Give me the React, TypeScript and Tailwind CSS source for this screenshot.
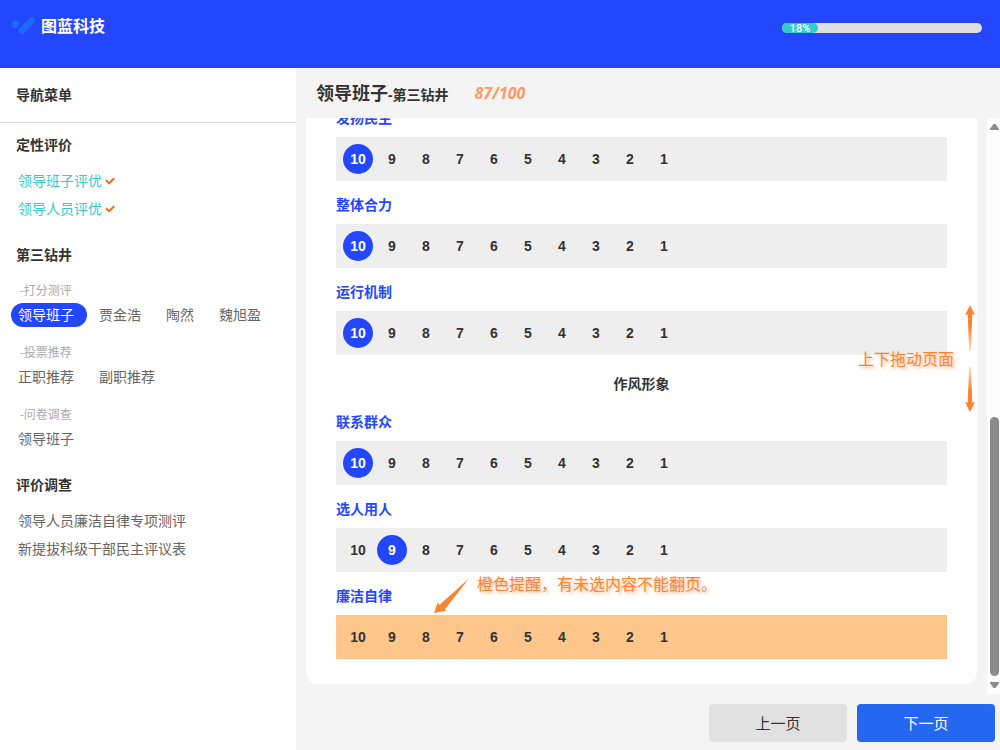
import { useState } from "react";

const SCORES = [10, 9, 8, 7, 6, 5, 4, 3, 2, 1];

type Criterion = { id: string; name: string; value: number | null };
type CriterionGroup = { title?: string; items: Criterion[] };

const GROUPS: CriterionGroup[] = [
  {
    items: [
      { id: "democracy", name: "发扬民主", value: 10 },
      { id: "cohesion", name: "整体合力", value: 10 },
      { id: "mechanism", name: "运行机制", value: 10 },
    ],
  },
  {
    title: "作风形象",
    items: [
      { id: "masses", name: "联系群众", value: 10 },
      { id: "personnel", name: "选人用人", value: 9 },
      { id: "integrity", name: "廉洁自律", value: null },
    ],
  },
];

const REVIEWS = [
  { title: "-打分测评", items: ["领导班子", "贾金浩", "陶然", "魏旭盈"] },
  { title: "-投票推荐", items: ["正职推荐", "副职推荐"] },
  { title: "-问卷调查", items: ["领导班子"] },
];

function Logo() {
  return (
    <svg className="h-5 w-6" viewBox="0 0 24 20" aria-hidden="true">
      <circle cx="3.5" cy="8.5" r="3.5" fill="#1b6bff" />
      <path d="M9.8 14.8 19.8 4.4" stroke="#1b6bff" strokeWidth="6.4" strokeLinecap="round" />
    </svg>
  );
}

function Header() {
  const percent = 18;
  return (
    <header className="flex h-[68px] shrink-0 items-start justify-between bg-[#2347ff] pr-[18px] pl-3">
      <div className="flex items-center gap-[5px] pt-4">
        <Logo />
        <span className="text-base leading-5 font-bold text-white">图蓝科技</span>
      </div>
      <div
        role="progressbar"
        aria-valuenow={percent}
        aria-label="完成进度"
        className="mt-[23px] h-2.5 w-[200px] rounded-full bg-[#dfdfdf]"
      >
        <div
          className="h-full rounded-full bg-[#33cccc] text-center font-[Roboto] text-[11px] leading-3 font-medium text-white"
          style={{ width: `${percent}%` }}
        >
          {percent}%
        </div>
      </div>
    </header>
  );
}

function SideTitle({ children }: { children: string }) {
  return <h2 className="pl-4 leading-5 font-bold text-[#333]">{children}</h2>;
}

function Sidebar() {
  return (
    <aside className="w-[296px] shrink-0 overflow-hidden bg-white text-sm">
      <div className="flex h-[55px] items-center border-b border-[#ddd]">
        <SideTitle>导航菜单</SideTitle>
      </div>
      <nav className="flex flex-col gap-[22px] pt-3 text-[#666]">
        <section>
          <SideTitle>定性评价</SideTitle>
          <ul className="mt-3 pl-[18px]">
            {["领导班子评优", "领导人员评优"].map((name) => (
              <li key={name} className="flex h-7 items-center gap-[3px]">
                <a href="#" className="text-[#33cccc]">{name}</a>
                <svg className="h-2.5 w-2.5" viewBox="0 0 10 10" aria-hidden="true">
                  <path d="M.9 4.3 4 7.2 9.2 2.3" fill="none" stroke="#ff6611" strokeWidth="2" />
                </svg>
              </li>
            ))}
          </ul>
        </section>
        <section className="pb-0.5">
          <SideTitle>第三钻井</SideTitle>
          <div className="mt-4 flex flex-col gap-4">
            {REVIEWS.map((review, groupIndex) => (
              <div key={review.title}>
                <h3 className="pl-5 text-xs leading-5 text-[#aaa]">{review.title}</h3>
                <ul className="mt-0.5 flex gap-[5px] pl-[11px]">
                  {review.items.map((item, index) => (
                    <li key={item}>
                      <a
                        href="#"
                        className={
                          groupIndex === 0 && index === 0
                            ? "block rounded-full bg-[#2347ff] pr-[13px] pl-[7px] leading-6 text-white"
                            : "block pr-[13px] pl-[7px] leading-6"
                        }
                      >
                        {item}
                      </a>
                    </li>
                  ))}
                </ul>
              </div>
            ))}
          </div>
        </section>
        <section>
          <SideTitle>评价调查</SideTitle>
          <ul className="mt-3 pl-[18px] leading-7">
            <li><a href="#">领导人员廉洁自律专项测评</a></li>
            <li><a href="#">新提拔科级干部民主评议表</a></li>
          </ul>
        </section>
      </nav>
    </aside>
  );
}

function MissingHint() {
  return (
    <div className="pointer-events-none absolute top-0 left-[97px] flex items-start gap-2">
      <svg className="mt-1.5 h-9 w-9" viewBox="0 0 36 36" aria-hidden="true">
        <path d="M36 .5 11.8 31.4 13 32.8 1 35 4.5 24.8 6.7 26.7Z" fill="#fa8430" />
      </svg>
      <p className="text-base leading-6 whitespace-nowrap text-[#fa8430] [text-shadow:2px_2px_3px_#fa843099]">
        橙色提醒，有未选内容不能翻页。
      </p>
    </div>
  );
}

function DragHint() {
  return (
    <div className="pointer-events-none absolute top-[187px] right-0.5 flex items-center gap-[11px]">
      <p className="text-base leading-6 text-[#fa8430] [text-shadow:2px_2px_3px_#fa843099]">上下拖动页面</p>
      <svg className="h-[107px] w-2.5" viewBox="0 0 10 107" aria-hidden="true">
        <defs>
          <linearGradient id="fade-down" x1="0" y1="0" x2="0" y2="1">
            <stop offset="0.5" stopColor="#fa8430" />
            <stop offset="1" stopColor="#fa8430" stopOpacity="0.3" />
          </linearGradient>
          <linearGradient id="fade-up" x1="0" y1="1" x2="0" y2="0">
            <stop offset="0.5" stopColor="#fa8430" />
            <stop offset="1" stopColor="#fa8430" stopOpacity="0.3" />
          </linearGradient>
        </defs>
        <path d="M5 0 10 10 7.3 9.2 5.9 45H4.1L2.7 9.2 0 10Z" fill="url(#fade-down)" />
        <path d="M5 107 10 97 7.3 97.8 5.9 62H4.1L2.7 97.8 0 97Z" fill="url(#fade-up)" />
      </svg>
    </div>
  );
}

function ScoreRow({ item }: { item: Criterion }) {
  const [value, setValue] = useState(item.value);
  const missing = value === null;
  return (
    <div className="relative">
      <fieldset>
        <legend className="block pt-3.5 pb-[9px] text-sm leading-5 font-bold text-[#2347ff]">{item.name}</legend>
        <div className={missing ? "flex h-11 items-center gap-1 bg-[#ffc68c] pl-[7px]" : "flex h-11 items-center gap-1 bg-[#eee] pl-[7px]"}>
          {SCORES.map((score) => (
            <label key={score} className="grid size-[30px] cursor-pointer place-items-center">
              <input
                type="radio"
                name={item.id}
                value={score}
                checked={value === score}
                onChange={() => setValue(score)}
                className="peer col-start-1 row-start-1 size-[30px] appearance-none rounded-full checked:bg-[#2347ff]"
              />
              <span className="z-10 col-start-1 row-start-1 font-['Liberation_Sans',sans-serif] text-sm leading-5 font-bold text-[#333] peer-checked:text-white">
                {score}
              </span>
            </label>
          ))}
        </div>
      </fieldset>
      {missing && <MissingHint />}
    </div>
  );
}

function ScrollRail() {
  return (
    <div className="flex w-[13px] shrink-0 flex-col items-center bg-[#fcfcfc] pl-0.5" aria-hidden="true">
      <svg className="mt-1.5 h-2 w-[9px]" viewBox="0 0 9 8">
        <path d="M3.5 0H5.5L9 5V6H0V5Z" fill="#8b8b8b" />
      </svg>
      <div className="flex w-[9px] flex-1 flex-col">
        <div className="flex-[286]" />
        <div className="flex-[260] rounded-full bg-[#8b8b8b]" />
      </div>
      <svg className="mt-1.5 mb-[5px] h-[7px] w-[9px]" viewBox="0 0 9 7">
        <path d="M3.5 6H5.5L9 1V0H0V1Z" fill="#8b8b8b" />
      </svg>
    </div>
  );
}

export default function App() {
  return (
    <div className="flex h-screen flex-col font-['Open_Sans','Noto_Sans_CJK_SC',sans-serif]">
      <Header />
      <div className="flex min-h-0 flex-1">
        <Sidebar />
        <main className="flex min-w-0 flex-1 flex-col bg-[#f4f4f4]">
          <div className="flex h-[50px] shrink-0 items-center gap-[26px] pl-5 text-[#333]">
            <h1 className="text-lg leading-6 font-bold">
              领导班子<span className="text-sm">-第三钻井</span>
            </h1>
            <span className="text-base leading-6 font-bold text-[#ff9966] italic">87/100</span>
          </div>
          <div className="flex min-h-0 flex-1 gap-2.5 pl-2.5">
            <div className="relative flex min-w-0 flex-1">
              <div className="flex flex-1 flex-col-reverse overflow-y-auto [scrollbar-width:none]">
                <div className="mb-2.5 rounded-b-xl bg-white px-[30px] pb-[25px]">
                  {GROUPS.map((group) => (
                    <section key={group.items[0].id}>
                      {group.title && (
                        <h2 className="pt-[19px] pb-1 text-center text-sm leading-5 font-bold text-[#333]">{group.title}</h2>
                      )}
                      {group.items.map((item) => (
                        <ScoreRow key={item.id} item={item} />
                      ))}
                    </section>
                  ))}
                </div>
              </div>
              <DragHint />
            </div>
            <ScrollRail />
          </div>
          <div className="flex shrink-0 justify-end gap-2.5 pt-2.5 pr-[5px] pb-2 text-[15px]">
            <button type="button" className="h-[38px] w-[138px] rounded bg-[#e1e1e1] text-[#333]">上一页</button>
            <button type="button" className="h-[38px] w-[138px] rounded bg-[#2468f2] text-white">下一页</button>
          </div>
        </main>
      </div>
    </div>
  );
}
